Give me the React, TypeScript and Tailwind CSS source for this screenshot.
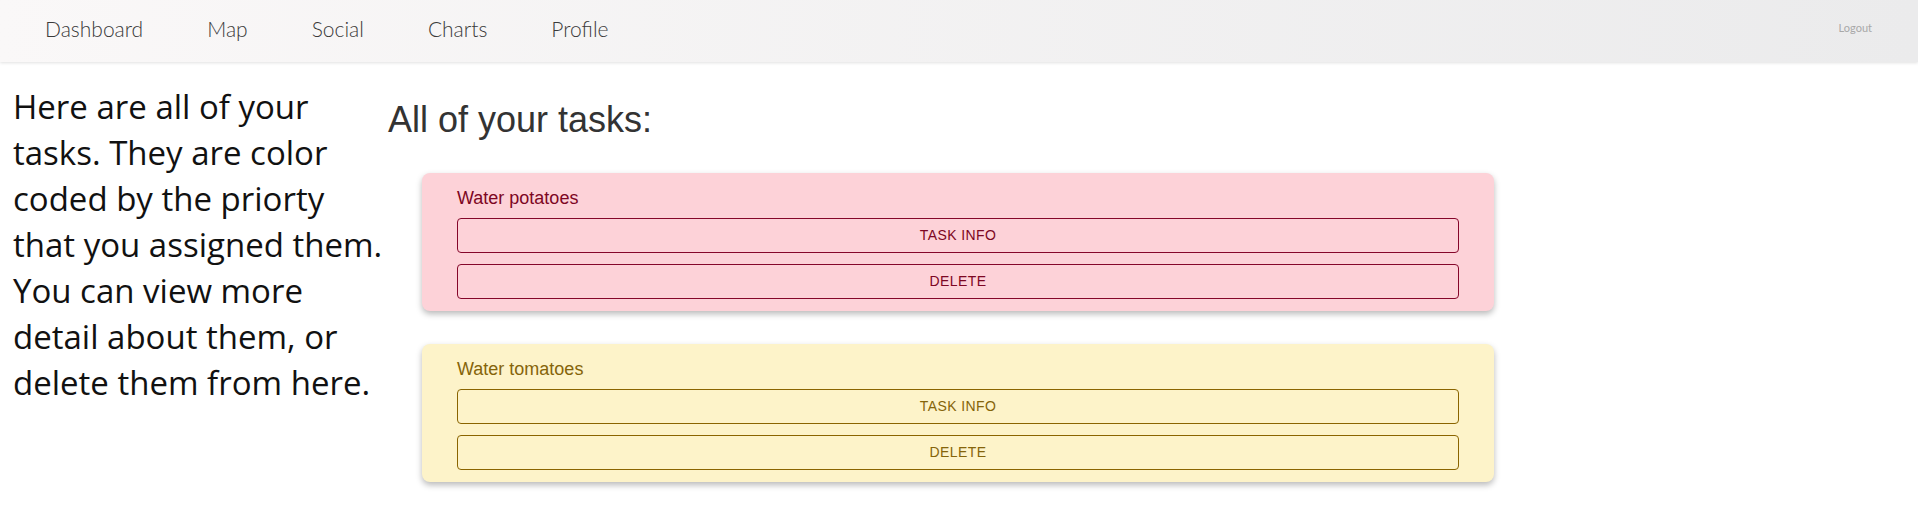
import React from 'react';

interface Task {
  id: number;
  name: string;
  priority: 'high' | 'medium';
}

const tasks: Task[] = [
  { id: 1, name: 'Water potatoes', priority: 'high' },
  { id: 2, name: 'Water tomatoes', priority: 'medium' },
];

const navLinks = ['Dashboard', 'Map', 'Social', 'Charts', 'Profile'];

function TaskCard({ task }: { task: Task }) {
  const high = task.priority === 'high';
  const card = high ? 'bg-[#fdd2d8] text-[#7d0623]' : 'bg-[#fdf3c9] text-[#85640a]';
  const btn = high ? 'border-[#85062a] text-[#7d0623]' : 'border-[#8a6400] text-[#85640a]';

  return (
    <div className={`ml-[34px] w-[1072px] rounded-[8px] px-[35px] pt-[13px] pb-[12px] shadow-[0_3px_6px_rgba(0,0,0,0.28)] ${card}`}>
      <p className="text-[18px] leading-[24px]">{task.name}</p>
      <div className="mt-[8px] flex flex-col gap-[11px]">
        <button className={`h-[35px] w-full rounded-[4px] border text-[14px] tracking-[0.4px] ${btn}`}>
          TASK INFO
        </button>
        <button className={`h-[35px] w-full rounded-[4px] border text-[14px] tracking-[0.4px] ${btn}`}>
          DELETE
        </button>
      </div>
    </div>
  );
}

export default function App() {
  return (
    <div className="min-h-screen bg-white font-['Liberation_Sans',Arial,sans-serif]">
      {/* Top bar */}
      <nav className="flex h-[62px] items-center bg-gradient-to-r from-[#faf8f8] to-[#ebebec] pb-[5px] shadow-[0_1px_3px_rgba(0,0,0,0.12)]">
        <ul className="flex gap-[64px] pl-[45px] font-['Lato',sans-serif] text-[21px] font-light text-[#3a3a3a]">
          {navLinks.map((l) => (
            <li key={l}>{l}</li>
          ))}
        </ul>
        <span className="ml-auto pr-[46px] font-['Lato',sans-serif] text-[11px] text-[#a8a8a8]">Logout</span>
      </nav>

      <div className="flex">
        {/* Intro text */}
        <p className="mt-[22px] w-[388px] shrink-0 pl-[13px] font-['Open_Sans',sans-serif] text-[33px] leading-[46px] text-[#111]">
          Here are all of your
          <br />
          tasks. They are color
          <br />
          coded by the priorty
          <br />
          that you assigned them.
          <br />
          You can view more
          <br />
          detail about them, or
          <br />
          delete them from here.
        </p>

        {/* Task list */}
        <div className="pt-[38px]">
          <h2 className="text-[36px] leading-[40px] text-[#333]">All of your tasks:</h2>
          <div className="mt-[33px] flex flex-col gap-[33px]">
            {tasks.map((t) => (
              <TaskCard key={t.id} task={t} />
            ))}
          </div>
        </div>
      </div>
    </div>
  );
}
